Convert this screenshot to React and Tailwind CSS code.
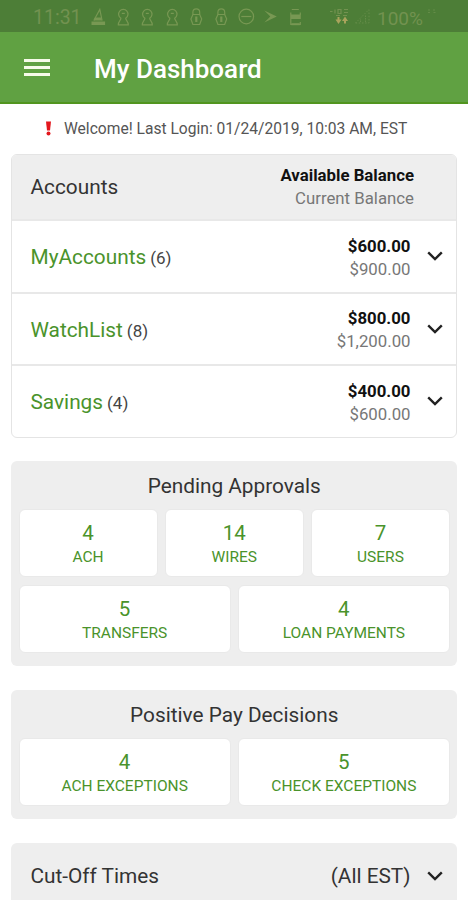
const ACCOUNTS = [
  { name: "MyAccounts", count: 6, available: "$600.00", current: "$900.00" },
  { name: "WatchList", count: 8, available: "$800.00", current: "$1,200.00" },
  { name: "Savings", count: 4, available: "$400.00", current: "$600.00" },
];

const APPROVALS_TOP = [
  { label: "ACH", count: 4 },
  { label: "WIRES", count: 14 },
  { label: "USERS", count: 7 },
];

const APPROVALS_BOTTOM = [
  { label: "TRANSFERS", count: 5 },
  { label: "LOAN PAYMENTS", count: 4 },
];

const EXCEPTIONS = [
  { label: "ACH EXCEPTIONS", count: 4 },
  { label: "CHECK EXCEPTIONS", count: 5 },
];

function StatusIcon({ children }) {
  return (
    <svg
      className="h-5 w-[24.6px] shrink-0"
      viewBox="-12.3 -10 24.6 20"
      fill="none"
      stroke="currentColor"
      strokeWidth="1.2"
    >
      {children}
    </svg>
  );
}

function Keyhole() {
  return (
    <StatusIcon>
      <path d="M-2.4 1.2A4.7 4.7 0 1 1 2.4 1.2C2.4 3.4 5 4 5 7.8H-5C-5 4-2.4 3.4-2.4 1.2Z" />
      <path d="M-1.5 -3.6H1.5" />
    </StatusIcon>
  );
}

function Padlock() {
  return (
    <StatusIcon>
      <path d="M-3.4 -2.5V-4.8A3.4 3.4 0 0 1 3.4 -4.8V-2.5" />
      <path d="M-3.4 -2.5H3.4L5.4 2L3.4 7.5H-3.4L-5.4 2Z" />
      <path d="M0 -0.5V5" strokeWidth="2.2" />
    </StatusIcon>
  );
}

function StatusBar() {
  return (
    <div className="flex h-8 items-center bg-[#4d7e37] pt-0.5 text-[#729250]">
      <span className="w-[86px] pl-[33px] pt-0.5 text-[19.5px] leading-none">11:31</span>
      <div className="flex w-[222px] text-[#789853]">
        <StatusIcon>
          <path d="M-6.8 4.5H6.8V8H-6.8Z" fill="currentColor" stroke="none" />
          <path d="M-4.5 3.5L1.5 -7.5L3.8 3.5" />
          <path d="M-3.5 0.5H3.5V3.5H-4.5Z" fill="currentColor" stroke="none" />
        </StatusIcon>
        <Keyhole />
        <Keyhole />
        <Keyhole />
        <Padlock />
        <Padlock />
        <StatusIcon>
          <circle cx="0" cy="-0.5" r="7.3" />
          <path d="M-5 -0.5H5" />
        </StatusIcon>
        <StatusIcon>
          <path d="M-6 -6.5L6.5 -0.5L-6 5.5L0 -0.5Z" fill="currentColor" stroke="none" />
        </StatusIcon>
        <StatusIcon>
          <path d="M-3.5 -7.5H3.5M-4.5 -4.5V7.5H5V5M5 -4.5V-2" />
          <path d="M-4.5 -2.5H5.5V2H-4.5Z" fill="currentColor" stroke="none" />
          <path d="M-4 7.2H4.5" strokeWidth="2" />
        </StatusIcon>
      </div>
      <svg className="ml-5 h-5 w-[25px]" viewBox="0 0 25 20" fill="none" stroke="currentColor">
        <path
          d="M2 4.5H4.5M7 2.5V6.5M10 2.5H13V6.5H10ZM16 2.5H20M16 5.5H20M8 8.5H12M15 8.5H19"
          strokeWidth="1.2"
        />
        <path
          className="fill-[#a9a35c] stroke-none"
          d="M9.5 10H11.5V12.5H13.5L10.5 17L7.5 12.5H9.5ZM16 16.5H18V14H20L17 9.5L14 14H16Z"
        />
      </svg>
      <svg className="h-5 w-[24px]" viewBox="0 0 23 20" fill="none" stroke="#648c48">
        <path d="M2 16H15.5V2.5Z" strokeDasharray="1.6 1.6" />
        <path d="M7 15V12M12 15V8" strokeDasharray="1.5 1" />
      </svg>
      <span className="w-[49px] pt-0.5 text-[19px] leading-none">100%</span>
      <svg className="h-5 w-3" viewBox="0 0 12 20" fill="none" stroke="#648c48">
        <path d="M2 3H4M7 3H9M2 5.5H4M7.5 5.5H9.5" />
      </svg>
    </div>
  );
}

function Chevron() {
  return (
    <svg
      className="h-2.5 w-4 shrink-0 text-[#222]"
      viewBox="0 0 16 10"
      fill="none"
      stroke="currentColor"
      strokeWidth="2.4"
    >
      <path d="M1.2 1.4L8 8L14.8 1.4" />
    </svg>
  );
}

function AccountRow({ account }) {
  return (
    <div className="flex h-[72.6px] items-center border-t-2 border-[#e8e8e8] pr-[13.5px] pl-[18.5px]">
      <div className="flex-1 pt-[2.5px]">
        <span className="text-[20.8px] leading-7 text-[#4a932b]">{account.name}</span>{" "}
        <span className="text-[17px] text-[#444]">({account.count})</span>
      </div>
      <div className="mr-4 pt-[3px] text-right text-[16.8px] leading-[23px]">
        <div className="font-bold text-[#111]">{account.available}</div>
        <div className="text-[#777]">{account.current}</div>
      </div>
      <Chevron />
    </div>
  );
}

function Tile({ tile }) {
  return (
    <div className="h-[68px] flex-1 rounded-md border border-[#e9e9e9] bg-white pt-[11px] text-center text-[#4a932b]">
      <div className="text-[20.5px] leading-6">{tile.count}</div>
      <div className="text-[15.5px] leading-[25px]">{tile.label}</div>
    </div>
  );
}

function TilePanel({ title, rows }) {
  return (
    <section className="mx-[11px] rounded-md bg-[#eee] pr-[7px] pb-[13px] pl-[7.5px]">
      <h2 className="h-12 text-center text-[20.8px] leading-[50px] text-[#333]">{title}</h2>
      <div className="flex flex-col gap-2">
        {rows.map((tiles, i) => (
          <div key={i} className="flex gap-[7px]">
            {tiles.map((tile) => (
              <Tile key={tile.label} tile={tile} />
            ))}
          </div>
        ))}
      </div>
    </section>
  );
}

function App() {
  return (
    <div className="h-[900px] w-[468px] overflow-hidden bg-white font-['Roboto','Liberation_Sans',sans-serif]">
      <StatusBar />
      <header className="flex h-[72px] items-center border-b-2 border-[#51951f] bg-[#60a142] pl-6 text-white">
        <button type="button" aria-label="Menu" className="flex w-[26px] flex-col gap-1">
          <span className="h-[3px] bg-[#f6fbe9]" />
          <span className="h-[3px] bg-[#f6fbe9]" />
          <span className="h-[3px] bg-[#f6fbe9]" />
        </button>
        <h1 className="pt-1 pl-11 text-[26px] font-medium">My Dashboard</h1>
      </header>

      <div className="flex h-[50px] items-center pl-[45px]">
        <svg className="-mt-0.5 h-[15px] w-[7px]" viewBox="0 0 7 15" fill="#e3171d">
          <path d="M1 0.5H6L5 9.5H2Z" />
          <circle cx="3.5" cy="12.6" r="2" />
        </svg>
        <p className="pt-0.5 pl-3 text-[15.6px] text-[#555]">
          Welcome! Last Login: 01/24/2019, 10:03 AM, EST
        </p>
      </div>

      <section className="mx-[11px] h-[284px] overflow-hidden rounded-md border border-[#e4e4e4]">
        <div className="flex h-16 items-center justify-between bg-[#eee] pr-[42px] pl-[18.5px]">
          <h2 className="pt-0.5 text-[20.8px] text-[#333]">Accounts</h2>
          <div className="text-right text-[16.8px] leading-[23px]">
            <div className="font-bold text-[#111]">Available Balance</div>
            <div className="text-[#777]">Current Balance</div>
          </div>
        </div>
        {ACCOUNTS.map((account) => (
          <AccountRow key={account.name} account={account} />
        ))}
      </section>

      <div className="mt-[23px] flex flex-col gap-6">
        <TilePanel title="Pending Approvals" rows={[APPROVALS_TOP, APPROVALS_BOTTOM]} />
        <TilePanel title="Positive Pay Decisions" rows={[EXCEPTIONS]} />
        <section className="mx-[11px] flex h-[66px] items-center rounded-md bg-[#eee] pr-[14.5px] pl-[19.5px] text-[20.8px] text-[#333]">
          <h2 className="flex-1 pt-0.5">Cut-Off Times</h2>
          <span className="mr-4 pt-0.5">(All EST)</span>
          <Chevron />
        </section>
      </div>
    </div>
  );
}

export default App;
